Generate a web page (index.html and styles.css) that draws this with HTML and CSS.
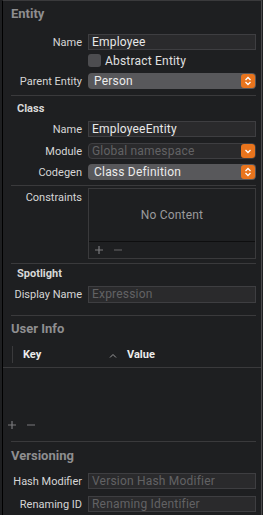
FILE: index.html
```html
<!DOCTYPE html>
<html lang="en">
<head>
  <meta charset="UTF-8" />
  <title>Entity Inspector</title>
  <link rel="stylesheet" href="styles.css">
</head>
<body>
  <div class="inspector">

    <!-- Entity -->
    <h2 class="group-title entity-title">Entity</h2>
    <div class="form entity-form">
      <span class="label">Name</span>
      <div class="text-field">Employee</div>
      <span></span>
      <div class="checkbox"><span class="box"></span>Abstract Entity</div>
      <span class="label">Parent Entity</span>
      <div class="popup">Person
        <span class="popup-btn">
          <svg width="8" height="10" viewBox="0 0 8 10"><path d="M1.5 4 L4 1.5 L6.5 4 M1.5 6 L4 8.5 L6.5 6" fill="none" stroke="#fff" stroke-width="1.3"/></svg>
        </span>
      </div>
    </div>
    <hr class="sep">

    <!-- Class -->
    <h3 class="sub-title class-title">Class</h3>
    <div class="form class-form">
      <span class="label">Name</span>
      <div class="text-field">EmployeeEntity</div>
      <span class="label">Module</span>
      <div class="combo"><span class="placeholder">Global namespace</span>
        <span class="popup-btn">
          <svg width="8" height="10" viewBox="0 0 8 10"><path d="M1.5 4 L4 6.5 L6.5 4" fill="none" stroke="#fff" stroke-width="1.3"/></svg>
        </span>
      </div>
      <span class="label">Codegen</span>
      <div class="popup">Class Definition
        <span class="popup-btn">
          <svg width="8" height="10" viewBox="0 0 8 10"><path d="M1.5 4 L4 1.5 L6.5 4 M1.5 6 L4 8.5 L6.5 6" fill="none" stroke="#fff" stroke-width="1.3"/></svg>
        </span>
      </div>
    </div>
    <hr class="sep">

    <div class="form constraints-form">
      <span class="label top">Constraints</span>
      <div class="list-box">
        <div class="list-empty">No Content</div>
        <div class="list-bar">
          <svg width="8" height="8" viewBox="0 0 8 8"><path d="M4 0 V8 M0 4 H8" stroke="#7a7a7d" stroke-width="1.2"/></svg>
          <svg width="8" height="8" viewBox="0 0 8 8"><path d="M0 4 H8" stroke="#5a5a5d" stroke-width="1.2"/></svg>
        </div>
      </div>
    </div>
    <hr class="sep">

    <!-- Spotlight -->
    <h3 class="sub-title">Spotlight</h3>
    <div class="form spotlight-form">
      <span class="label">Display Name</span>
      <div class="text-field"><span class="placeholder">Expression</span></div>
    </div>
    <hr class="sep">

    <!-- User Info -->
    <h2 class="group-title">User Info</h2>
    <div class="table">
      <div class="table-head">
        <span class="col-key">Key</span>
        <span class="sort">
          <svg width="8" height="5" viewBox="0 0 8 5"><path d="M1 4.5 L4 1.5 L7 4.5" fill="none" stroke="#9a9a9c" stroke-width="1"/></svg>
        </span>
        <span class="col-value">Value</span>
      </div>
      <div class="table-body"></div>
    </div>
    <div class="table-bar">
      <svg width="8" height="8" viewBox="0 0 8 8"><path d="M4 0 V8 M0 4 H8" stroke="#7a7a7d" stroke-width="1.2"/></svg>
      <svg width="8" height="8" viewBox="0 0 8 8"><path d="M0 4 H8" stroke="#6a6a6d" stroke-width="1.2"/></svg>
    </div>
    <hr class="sep">

    <!-- Versioning -->
    <h2 class="group-title version-title">Versioning</h2>
    <div class="form version-form">
      <span class="label">Hash Modifier</span>
      <div class="text-field"><span class="placeholder">Version Hash Modifier</span></div>
      <span class="label">Renaming ID</span>
      <div class="text-field"><span class="placeholder">Renaming Identifier</span></div>
    </div>

  </div>
</body>
</html>
```

FILE: styles.css
```css
* {
  margin: 0;
  padding: 0;
  box-sizing: border-box;
}

body {
  font-family: Roboto, 'Noto Sans', sans-serif;
  font-size: 11px;
  background-color: #1e1f21;
  color: #dcdcdc;
  width: 263px;
  height: 515px;
  overflow: hidden;
}

.inspector {
  margin-left: 2px;
  width: 260px;
  height: 515px;
  border-top: 1px solid #3a3a3c;
  border-left: 1px solid #000;
  border-right: 1px solid #4a4a4c;
}

.group-title {
  font-size: 13px;
  font-weight: 700;
  color: #8e8e90;
  padding-left: 8px;
  height: 25px;
  line-height: 25px;
}

.entity-title {
  height: 26px;
  line-height: 26px;
}

.version-title {
  height: 26px;
  line-height: 28px;
}

.sub-title {
  font-size: 11px;
  font-weight: 700;
  color: #d8d8d8;
  padding-left: 14px;
  height: 20px;
  line-height: 20px;
}

.class-title {
  height: 24px;
  line-height: 25px;
}

.sep {
  border: none;
  border-top: 1px solid #3a3a3c;
  margin: 0 5px 0 8px;
}

.form {
  display: grid;
  grid-template-columns: 79px 168px;
  column-gap: 6px;
  row-gap: 5px;
  align-items: center;
}

.label {
  text-align: right;
  color: #d6d6d6;
  white-space: nowrap;
}

.label.top {
  align-self: start;
  padding-top: 3px;
}

.text-field {
  height: 16px;
  line-height: 14px;
  padding-left: 3px;
  background-color: #2a2a2c;
  border: 1px solid #3e3e41;
  color: #e8e8e8;
  font-size: 12px;
  letter-spacing: 0.2px;
}

.placeholder {
  color: #626264;
}

.popup,
.combo {
  position: relative;
  height: 16px;
  line-height: 16px;
  padding-left: 6px;
  border-radius: 4px;
  font-size: 12px;
  letter-spacing: 0.2px;
}

.popup {
  background-color: #58585b;
  color: #ececec;
}

.combo {
  background-color: #2a2a2c;
  border: 1px solid #3e3e41;
  line-height: 14px;
  padding-left: 3px;
}

.popup-btn {
  position: absolute;
  right: 1px;
  top: 1px;
  width: 14px;
  height: 14px;
  border-radius: 3px;
  background-color: #e8741d;
  display: flex;
  align-items: center;
  justify-content: center;
}

.combo .popup-btn {
  top: 0;
  right: 0;
}

.checkbox {
  display: flex;
  align-items: center;
  gap: 4px;
  height: 13px;
  font-size: 12px;
  letter-spacing: 0.2px;
  color: #e0e0e0;
}

.checkbox .box {
  width: 13px;
  height: 13px;
  border-radius: 3px;
  background-color: #4d4d50;
}

.entity-form {
  padding-top: 7px;
  padding-bottom: 6px;
  row-gap: 5px;
}

.entity-form .checkbox {
  margin-top: -1px;
  margin-bottom: 1px;
}

.class-form {
  padding-top: 1px;
  padding-bottom: 5px;
  row-gap: 5px;
}

.class-form .text-field {
  margin-bottom: 1px;
}

.constraints-form {
  padding-top: 2px;
  padding-bottom: 4px;
}

.list-box {
  height: 71px;
  border: 1px solid #3a3a3c;
  display: flex;
  flex-direction: column;
}

.list-empty {
  flex: 1;
  display: flex;
  align-items: center;
  justify-content: center;
  color: #9a9a9c;
  font-size: 12px;
  letter-spacing: 0.2px;
  border-bottom: 1px solid #0e0e0f;
}

.list-bar,
.table-bar {
  height: 16px;
  display: flex;
  align-items: center;
  gap: 11px;
  padding-left: 6px;
}

.spotlight-form {
  padding-top: 2px;
  padding-bottom: 12px;
}

.spotlight-form .text-field {
  height: 17px;
}

.table-head {
  position: relative;
  height: 27px;
  display: flex;
  align-items: center;
  border-bottom: 1px solid #3a3a3c;
  font-weight: 700;
  color: #ececec;
  font-size: 11px;
}

.table-head::before {
  content: "";
  position: absolute;
  left: 9px;
  top: 5px;
  height: 17px;
  border-left: 1px solid #3a3a3c;
}

.col-key {
  margin-left: 20px;
  width: 86px;
}

.sort {
  display: flex;
  margin-top: 2px;
  width: 18px;
}

.table-body {
  height: 47px;
}

.table-bar {
  padding-left: 5px;
  height: 20px;
  margin-bottom: 6px;
}

.version-form {
  padding-top: 5px;
  row-gap: 7px;
}

.version-form .text-field {
  height: 16px;
}
```
